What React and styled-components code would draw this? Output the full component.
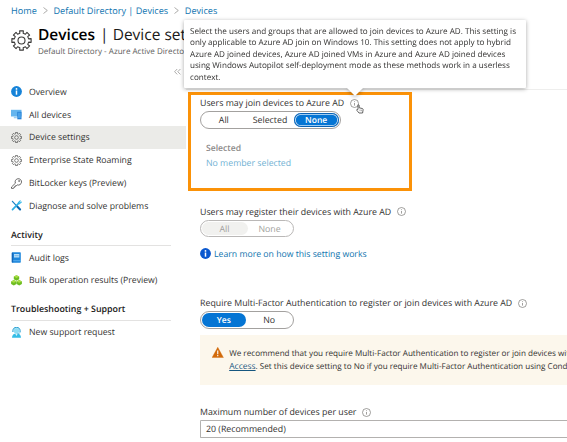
import React from 'react';
import styled, { createGlobalStyle } from 'styled-components';

const GlobalStyle = createGlobalStyle`
  * { box-sizing: border-box; }
  body {
    margin: 0;
    background: #fff;
    color: #323130;
    font: 8.7px/12px "Open Sans", "Noto Sans", sans-serif;
    text-rendering: geometricPrecision;
    overflow: hidden;
  }
`;

const Page = styled.div`
  position: relative;
  width: 567px;
  height: 442px;
  overflow: hidden;
  white-space: nowrap;
`;

const Breadcrumb = styled.nav`
  display: flex;
  align-items: center;
  height: 20px;
  padding: 1px 0 0 11px;
  font-size: 9.15px;
`;

const Crumb = styled.a`
  color: #0f74b0;
`;

const CrumbArrow = styled.svg`
  width: 5px;
  height: 7px;
  margin: 0 5.8px;
  fill: none;
  stroke: #8a8886;
  stroke-width: 0.7;
`;

const Header = styled.header`
  display: flex;
  height: 44px;
  padding: 4.5px 0 0 11px;
`;

const HeaderIcon = styled.div`
  width: 27px;
  padding-top: 5px;
`;

const Title = styled.h1`
  margin: 0;
  height: 20px;
  font-size: 15.5px;
  font-weight: 400;
  line-height: 19px;
  color: #1b1a19;

  strong { font-weight: 600; color: #000; margin-right: 1px; }
`;

const Subtitle = styled.div`
  font-size: 8.05px;
  line-height: 13px;
  color: #605e5c;
`;

const Columns = styled.div`
  display: flex;
`;

const Sidebar = styled.aside`
  width: 186px;
  flex: none;
`;

const Collapse = styled.div`
  height: 16.5px;
  padding: 3px 5px 0 0;
  text-align: right;

  svg { display: block; margin-left: auto; }
`;

const NavItem = styled.a`
  display: flex;
  align-items: center;
  height: 22.8px;
  padding-left: 11px;
  color: #323130;
  background: ${p => (p.$selected ? '#ebebe8' : 'transparent')};

  svg { width: 11px; height: 11px; margin-right: 7px; flex: none; }
`;

const NavHeading = styled.h2`
  width: 160px;
  height: 29px;
  margin: 0 0 0 11px;
  padding-top: 11.5px;
  border-bottom: 1px solid #e3e2e1;
  font-size: 8.9px;
  font-weight: 600;
  line-height: 12px;
  color: #1b1a19;
`;

const NavGroup = styled.div`
  width: 100%;
`;

const Content = styled.main`
  flex: 1;
  min-width: 0;
  margin-top: 25px;
  padding: 7px 0 0 14px;
  border-top: 1px solid #eeeeed;
`;

const Field = styled.section`
  position: relative;
  height: ${p => p.$height}px;
`;

const Label = styled.div`
  display: flex;
  align-items: center;
  height: 14px;
  padding-bottom: 2px;
  font-size: 8.82px;

  svg { margin-left: 5.7px; }
`;

const Toggle = styled.div`
  display: flex;
  width: ${p => p.$width}px;
  height: 17.5px;
  padding: 1px;
  margin-left: -0.5px;
  border: 1px solid ${p => (p.$disabled ? '#bab8b7' : '#a3a19f')};
  border-radius: 9px;
  color: ${p => (p.$disabled ? '#a19f9d' : '#323130')};
`;

const Option = styled.span`
  width: ${p => p.$width}px;
  border-radius: 7px;
  font-size: 8.8px;
  line-height: 14px;
  text-align: center;
  ${p => p.$muted && 'background: #f1f1ef;'}
  ${p => p.$active && 'background: #0575d4; color: #fff; font-weight: 600; font-size: 8.5px; line-height: 15px;'}
  ${p => p.$focused && 'box-shadow: inset 0 0 0 1px #0862b5, inset 0 0 0 1.8px #d2e8fa;'}
`;

const Highlight = styled.div`
  position: absolute;
  left: -12.3px;
  top: -5.3px;
  width: 224px;
  height: 99.5px;
  border: 3px solid #fb9208;
  pointer-events: none;
`;

const MemberTitle = styled.div`
  margin: 13.5px 0 2.5px 6px;
  font-size: 8.65px;
  font-weight: 600;
  color: #8b8988;
`;

const MemberLink = styled.a`
  display: block;
  margin-left: 6px;
  font-size: 8.75px;
  color: #70b1d3;
`;

const LearnMore = styled.a`
  display: flex;
  align-items: center;
  gap: 3px;
  margin-top: 10.8px;
  color: #0d72ad;
`;

const Warning = styled.div`
  display: flex;
  height: 49.5px;
  margin-top: 6.5px;
  padding: 13px 0 0 12px;
  background: #fcf7ec;
  font-size: 8.14px;
  line-height: 12.5px;

  svg { flex: none; margin: -1.5px 5.7px 0 0; }
  a { color: #15567f; text-decoration: underline; font-size: 8.5px; }
`;

const Select = styled.div`
  height: 18px;
  padding-left: 5px;
  border: 1px solid #b3b1af;
  border-right: 0;
  border-radius: 1.5px 0 0 1.5px;
  font-size: 8.8px;
  line-height: 17.6px;
`;

const Tooltip = styled.div`
  position: absolute;
  left: 183.5px;
  top: 19.5px;
  width: 342px;
  height: 68.5px;
  padding: 6.5px 6.5px;
  border-radius: 1px;
  background: #fff;
  filter: drop-shadow(0 1.5px 2px rgba(0, 0, 0, 0.34));
  font-size: 8.12px;
  line-height: 11.4px;
  z-index: 2;

  &::after {
    content: '';
    position: absolute;
    left: 163px;
    top: 100%;
    border: 8px solid transparent;
    border-top-color: #fff;
    border-bottom: 0;
  }
`;

const Cursor = styled.svg`
  position: absolute;
  left: 155.5px;
  top: 6.5px;
  width: 8px;
  height: 10px;
  z-index: 3;
`;

const teeth = Array.from({ length: 8 }, (_, i) => {
  const point = (r, deg) => {
    const a = ((i * 45 + deg) * Math.PI) / 180;
    return `${(12 + r * Math.cos(a)).toFixed(2)} ${(12 + r * Math.sin(a)).toFixed(2)}`;
  };
  return `${i ? 'L' : 'M'}${point(8.4, -13)}L${point(11.2, -11)}L${point(11.2, 11)}L${point(8.4, 13)}`;
}).join('') + 'Z';

const Gear = ({ size = 11, weight = 1.35 }) => (
  <svg width={size} height={size} viewBox="0 0 24 24" fill="none" stroke="#3b3a39" strokeWidth={weight} strokeLinejoin="round">
    <path d={teeth} />
    <circle cx="12" cy="12" r="4" />
  </svg>
);

const InfoOutline = () => (
  <svg width="9" height="9" viewBox="0 0 9 9" fill="none" stroke="#777573" strokeWidth="0.7">
    <circle cx="4.5" cy="4.5" r="4" />
    <path d="M4.5 4v2.6M4.5 2.3v.8" />
  </svg>
);

const InfoSolid = ({ size = 11, color = '#1683d8' }) => (
  <svg width={size} height={size} viewBox="0 0 11 11">
    <circle cx="5.5" cy="5.5" r="5.4" fill={color} />
    <circle cx="5.5" cy="2.9" r=".9" fill="#fff" />
    <path d="M5.5 4.5v4.2" stroke="#fff" strokeWidth="1.5" />
  </svg>
);

const DevicesIcon = () => (
  <svg viewBox="0 0 11 11">
    <path d="M0 .8h10.5v6.7H0z" fill="#65b5ee" />
    <path d="M2.8 7.5h3v1.8h-3z" fill="#9bcff3" />
    <path d="M6.3 2.8h4.2v7.5H6.3z" fill="#237fd5" />
    <path d="M7 3.6h2.8v5.5H7z" fill="#4ba1e8" />
  </svg>
);

const KeyIcon = () => (
  <svg viewBox="0 0 11 11" fill="none" stroke="#3b3a39" strokeWidth=".75" strokeLinejoin="round">
    <path d="M4.4 5.2A3.2 3.2 0 1 1 6.2 6.9l-1 .9H4.3l-.1 1-1 .1-.1 1-1 .5H.5V9z" />
    <circle cx="8.1" cy="3" r=".5" />
  </svg>
);

const ToolsIcon = () => (
  <svg viewBox="0 0 11 11" fill="none" strokeLinecap="round">
    <path d="M1.4 1.3l3.5 3.9" stroke="#1780c5" strokeWidth="1.2" />
    <path d="M6 6.3l3.1 3.2" stroke="#0c69b0" strokeWidth="2.1" />
    <path d="M1.5 9.6l6.3-6.4" stroke="#2daee4" strokeWidth="1.7" />
    <path d="M9.2.9L7.5 2.5l.9 1.1 1.9-1.5" stroke="#32b8ea" strokeWidth="1.2" />
  </svg>
);

const BookIcon = () => (
  <svg viewBox="0 0 11 11">
    <rect x=".8" y=".3" width="9" height="10.4" rx=".7" fill="#1e87dc" />
    <path d="M.8.8h1.4v9.6H.8z" fill="#1466b8" />
    <path d="M3 2h5.3v3.5H3z" fill="#b7def8" />
    <path d="M3.5 3.7h4.3" stroke="#4a9bdc" strokeWidth=".6" />
    <path d="M2.2 8.7h7.6" stroke="#66b6f2" strokeWidth=".8" />
  </svg>
);

const BulkIcon = () => (
  <svg viewBox="0 0 11 11">
    {[[5.5, 0.3], [2.8, 5.1], [8.2, 5.1]].map(([x, y]) => (
      <g key={x}>
        <path d={`M${x} ${y}l2.7 1.3v2.7l-2.7 1.4-2.7-1.4V${y + 1.3}z`} fill="#6fbd22" />
        <path d={`M${x} ${y}l2.7 1.3-2.7 1.3-2.7-1.3z`} fill="#a9df45" />
      </g>
    ))}
  </svg>
);

const SupportIcon = () => (
  <svg viewBox="0 0 11 11">
    <path d="M1 10.8c0-3 1.6-4.4 4.5-4.4S10 7.8 10 10.8z" fill="#35bde6" />
    <path d="M4.1 6.6h2.8L5.5 9z" fill="#d6f3fb" />
    <circle cx="5.5" cy="3.8" r="2.8" fill="#8edcf3" />
    <path d="M1.9 5V3.6C2 1.4 3.5.4 5.5.4s3.5 1 3.6 3.2V5" fill="none" stroke="#1697cd" strokeWidth="1" />
    <path d="M9 5c0 1.3-1 1.8-2.6 1.8" fill="none" stroke="#1697cd" strokeWidth=".6" />
  </svg>
);

const WarningIcon = () => (
  <svg width="11.5" height="11" viewBox="0 0 11.5 11">
    <path d="M5.75.3L11.4 10.6H.1z" fill="#d26a0a" stroke="#d26a0a" strokeWidth=".4" strokeLinejoin="round" />
    <path d="M5.75 3.6v3.6M5.75 8.1v1.2" stroke="#fff" strokeWidth="1.1" />
  </svg>
);

const Separator = () => (
  <CrumbArrow viewBox="0 0 5 7"><path d="M.5.5l3.8 3-3.8 3" /></CrumbArrow>
);

export default function App() {
  return (
    <Page>
      <GlobalStyle />
      <Breadcrumb>
        <Crumb>Home</Crumb><Separator />
        <Crumb>Default Directory | Devices</Crumb><Separator />
        <Crumb>Devices</Crumb>
      </Breadcrumb>
      <Header>
        <HeaderIcon><Gear size={21} weight={1.25} /></HeaderIcon>
        <div>
          <Title><strong>Devices</strong> | Device settings</Title>
          <Subtitle>Default Directory - Azure Active Directory</Subtitle>
        </div>
      </Header>
      <Columns>
        <Sidebar>
          <Collapse>
            <svg width="7" height="9" viewBox="0 0 7 9" fill="none" stroke="#8a8886" strokeWidth=".7">
              <path d="M3.2 2L.6 4.7l2.6 2.7M6.4 2L3.8 4.7l2.6 2.7" />
            </svg>
          </Collapse>
          <NavItem><InfoSolid />Overview</NavItem>
          <NavItem><DevicesIcon />All devices</NavItem>
          <NavItem $selected><Gear />Device settings</NavItem>
          <NavItem><Gear />Enterprise State Roaming</NavItem>
          <NavItem><KeyIcon />BitLocker keys (Preview)</NavItem>
          <NavItem><ToolsIcon />Diagnose and solve problems</NavItem>
          <NavGroup>
            <NavHeading>Activity</NavHeading>
            <NavItem><BookIcon />Audit logs</NavItem>
            <NavItem><BulkIcon />Bulk operation results (Preview)</NavItem>
          </NavGroup>
          <NavGroup>
            <NavHeading>Troubleshooting + Support</NavHeading>
            <NavItem><SupportIcon />New support request</NavItem>
          </NavGroup>
        </Sidebar>
        <Content>
          <Field $height={108.5}>
            <Highlight />
            <Label>Users may join devices to Azure AD<InfoOutline /></Label>
            <Cursor viewBox="0 0 8 10">
              <path d="M2 5V1.5c0-1 1.2-1 1.2 0v2.3l3 .7c.8.2 1 .6.9 1.3L6.6 9H3L.9 6.4c-.5-.8.2-1.3.9-.8z" fill="#fff" stroke="#333" strokeWidth=".75" />
              <path d="M4 5.5v1.7M5.4 5.7v1.5" stroke="#555" strokeWidth=".5" />
            </Cursor>
            <Toggle $width={141}>
              <Option $width={45}>All</Option>
              <Option $width={48}>Selected</Option>
              <Option $width={45} $active $focused>None</Option>
            </Toggle>
            <MemberTitle>Selected</MemberTitle>
            <MemberLink>No member selected</MemberLink>
          </Field>
          <Field $height={91.5}>
            <Label>Users may register their devices with Azure AD<InfoOutline /></Label>
            <Toggle $width={94.5} $disabled>
              <Option $width={46} $muted>All</Option>
              <Option $width={44}>None</Option>
            </Toggle>
            <LearnMore><InfoSolid color="#0b58cf" />Learn more on how this setting works</LearnMore>
          </Field>
          <Field $height={109}>
            <Label>Require Multi-Factor Authentication to register or join devices with Azure AD<InfoOutline /></Label>
            <Toggle $width={94.5}>
              <Option $width={45} $active>Yes</Option>
              <Option $width={46}>No</Option>
            </Toggle>
            <Warning>
              <WarningIcon />
              <div>
                We recommend that you require Multi-Factor Authentication to register or join devices with<br />
                <a>Access</a>. Set this device setting to No if you require Multi-Factor Authentication using Conditional
              </div>
            </Warning>
          </Field>
          <Field $height={34}>
            <Label>Maximum number of devices per user<InfoOutline /></Label>
            <Select>20 (Recommended)</Select>
          </Field>
        </Content>
      </Columns>
      <Tooltip role="tooltip">
        Select the users and groups that are allowed to join devices to Azure AD. This setting is<br />
        only applicable to Azure AD join on Windows 10. This setting does not apply to hybrid<br />
        Azure AD joined devices, Azure AD joined VMs in Azure and Azure AD joined devices<br />
        using Windows Autopilot self-deployment mode as these methods work in a userless<br />
        context.
      </Tooltip>
    </Page>
  );
}
